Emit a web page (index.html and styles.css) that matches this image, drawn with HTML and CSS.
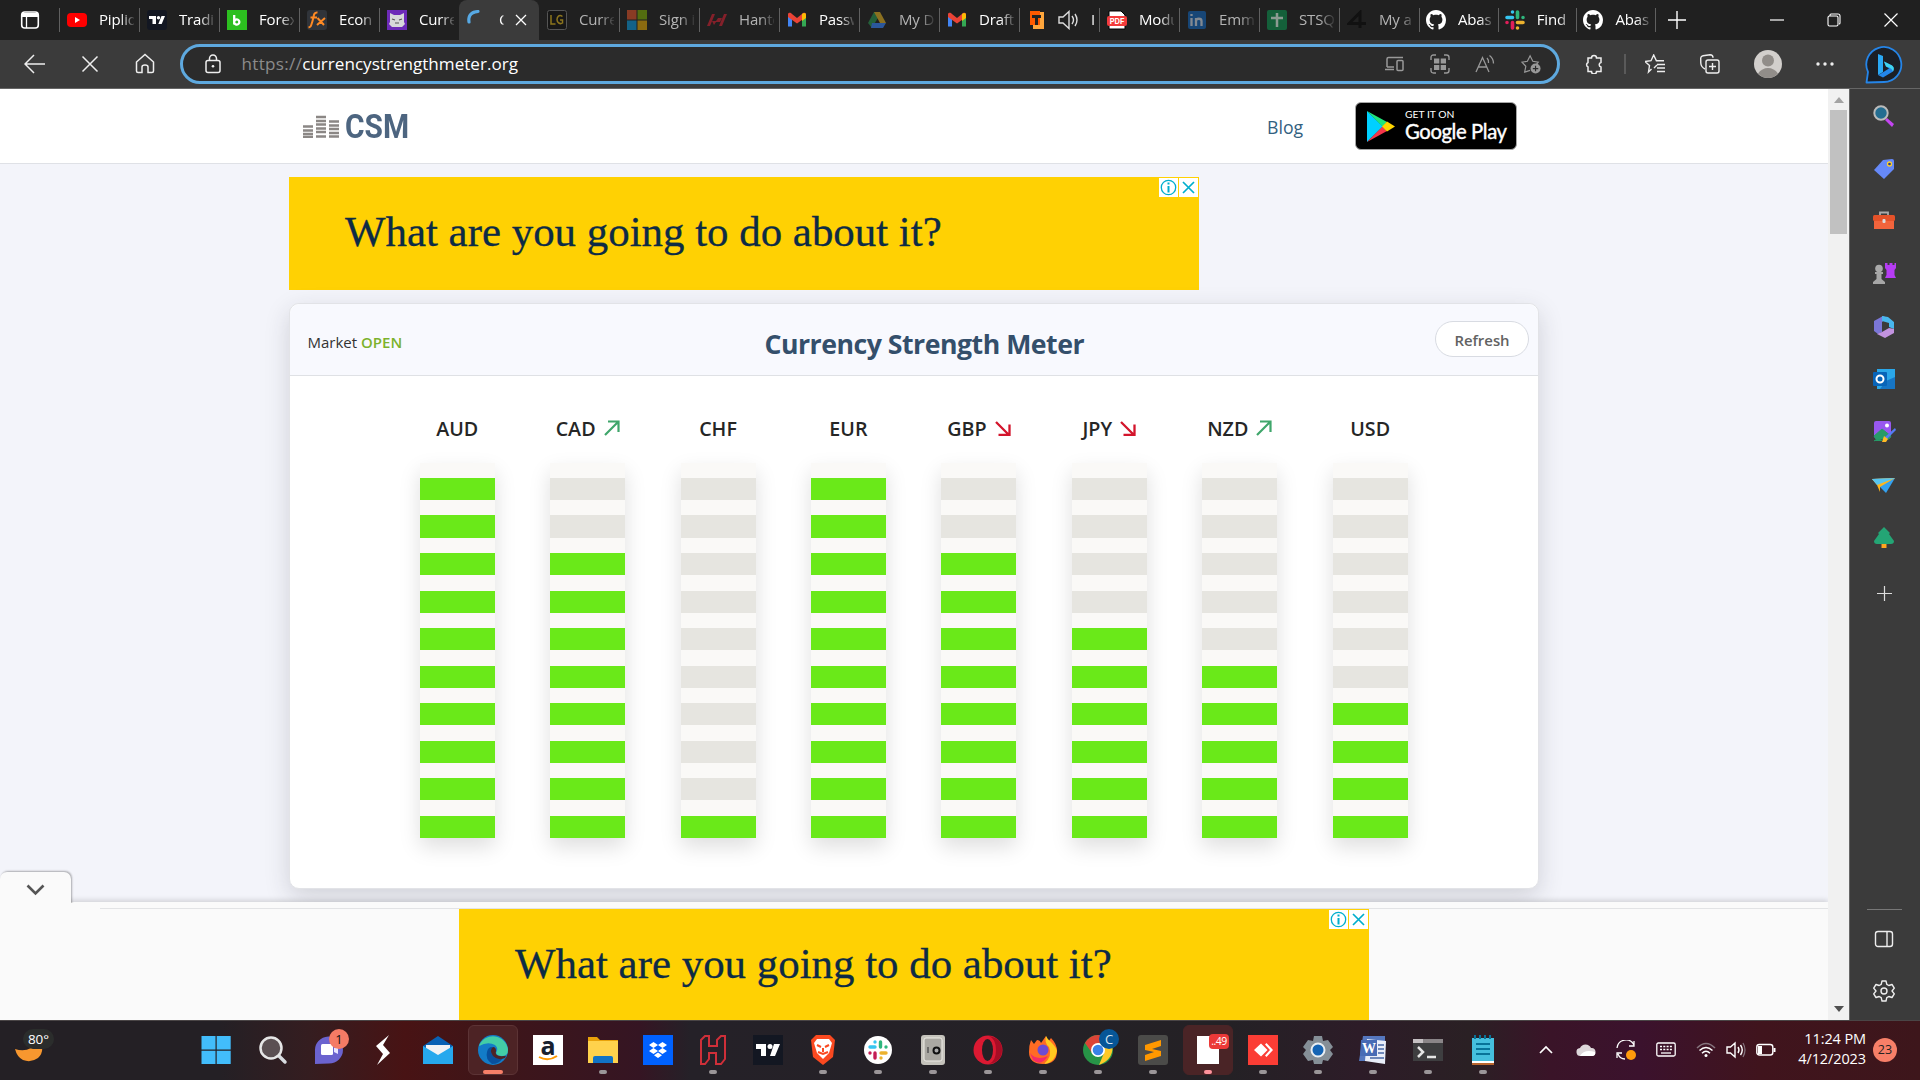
FILE: index.html
```html
<!DOCTYPE html>
<html lang="en">
<head>
<meta charset="utf-8">
<title>Currency Strength Meter</title>
<link rel="stylesheet" href="styles.css">
</head>
<body>
<div class="screen">
  <div class="tabstrip">
    <div class="tab-menu"><svg width="20" height="20" viewBox="0 0 20 20"><rect x="1.7" y="2" width="16.6" height="16" rx="3" fill="none" stroke="#fff" stroke-width="1.6"/><path d="M2 3h16v4H2z" fill="#fff"/><path d="M6.5 6v12" stroke="#fff" stroke-width="1.3"/></svg></div>
    <div class="tab"><svg viewBox="0 0 20 20"><rect y="3" width="20" height="14" rx="4" fill="#f00"/><path d="M8 7l5 3-5 3z" fill="#fff"/></svg><span>Pipliq</span></div>
    <div class="tab"><svg viewBox="0 0 20 20"><rect width="20" height="20" rx="3" fill="#131722"/><path d="M2 6h7v8H5.500V9H2zM14.500 6H18l-3.300 8h-3.400z" fill="#fff"/><circle cx="11.500" cy="7.700" r="1.700" fill="#fff"/></svg><span>Tradi</span></div>
    <div class="tab"><svg viewBox="0 0 20 20"><rect width="20" height="20" fill="#2cbf1f"/><path d="M7.200 5v9.500M7.200 11.500a2.600 2.600 0 1 1 0 1" fill="none" stroke="#fff" stroke-width="2.300"/></svg><span>Forex</span></div>
    <div class="tab"><svg viewBox="0 0 20 20"><rect width="20" height="20" rx="3" fill="#30343a"/><path d="M10.500 2.500C6.500 2 7 6 5.500 11S4 17 1.500 17.500M3.500 7.500h6.500M10.500 8l6.500 7M18 8l-8 7" fill="none" stroke="#ff8a24" stroke-width="2"/></svg><span>Econ</span></div>
    <div class="tab"><svg viewBox="0 0 20 20"><rect width="20" height="20" fill="#6d2ab8"/><path d="M3 3l4 2h6l4-2v9l1 2-3 3H5l-3-3 1-2z" fill="#d8d8da"/><path d="M5 9l3 1M15 9l-3 1M8 13h4" stroke="#555" stroke-width="1.200"/></svg><span>Curre</span></div>
    <div class="tab active"><svg viewBox="0 0 20 20"><path d="M2 12C1 6 4 2 11 1.500" fill="none" stroke="#57a9e4" stroke-width="3.200" stroke-linecap="round" stroke-dasharray="3.500 1"/></svg><span>C</span><svg class="close" viewBox="0 0 12 12"><path d="M1 1l10 10M11 1L1 11" stroke="#fff" stroke-width="1.300"/></svg></div>
    <div class="tab dim"><svg viewBox="0 0 20 20"><rect x=".5" y=".5" width="19" height="19" rx="2" fill="#171717" stroke="#555"/><path d="M4 5v9h4.500M15.500 6.500C12 4 10 7 10 9.700s3 5 5.500 3.300V10H13" fill="none" stroke="#8c751d" stroke-width="1.500"/></svg><span>Curre</span></div>
    <div class="tab dim"><svg viewBox="0 0 20 20"><path d="M0 0h9.500v9.500H0z" fill="#893b24"/><path d="M10.500 0H20v9.500h-9.500z" fill="#536d10"/><path d="M0 10.500h9.500V20H0z" fill="#136287"/><path d="M10.500 10.500H20V20h-9.500z" fill="#8b6a10"/></svg><span>Sign i</span></div>
    <div class="tab dim"><svg viewBox="0 0 20 20"><path d="M0 16L5 4h3L3 16zM5 11h4l2-3h4l-2 4H9l-2 3zM12 16l5-12h3l-5 12z" fill="#84202a"/></svg><span>Hante</span></div>
    <div class="tab"><svg viewBox="0 0 20 20"><path d="M1 16.500V4l4 3v9.500z" fill="#4285f4"/><path d="M15 7l4-3v12.500h-4z" fill="#34a853"/><path d="M1 4c1-2 3-1 4 0l5 4 5-4c1-1 3-2 4 0v3l-9 6.500L1 7z" fill="#ea4335"/><path d="M15 4c2-2 4-1 4 1v3l-4 3z" fill="#fbbc04"/></svg><span>Passw</span></div>
    <div class="tab dim"><svg viewBox="0 0 20 20"><path d="M7 2h3l2 4-7 12-4-5z" fill="#245f39"/><path d="M7 2h6l6 11h-6z" fill="#8b7020"/><path d="M5 13h14l-3 5H4z" fill="#2b579c"/></svg><span>My D</span></div>
    <div class="tab"><svg viewBox="0 0 20 20"><path d="M1 16.500V4l4 3v9.500z" fill="#4285f4"/><path d="M15 7l4-3v12.500h-4z" fill="#34a853"/><path d="M1 4c1-2 3-1 4 0l5 4 5-4c1-1 3-2 4 0v3l-9 6.500L1 7z" fill="#ea4335"/><path d="M15 4c2-2 4-1 4 1v3l-4 3z" fill="#fbbc04"/></svg><span>Draft</span></div>
    <div class="tab"><svg viewBox="0 0 20 20"><path d="M6 2h11v17H6z" fill="#ffa63c"/><path d="M3 1h10v14H3z" fill="#ff5a00"/><path d="M5 5h9v3h-3v7H8V8H5z" fill="#222"/></svg><svg class="sound" viewBox="0 0 20 20"><path d="M1 7h4l6-5.500v17L5 13H1zM14 6q3 4 0 8M17 4q4 6 0 12" fill="none" stroke="#ddd" stroke-width="1.400"/></svg><span>I</span></div>
    <div class="tab"><svg viewBox="0 0 20 20"><path d="M2 1h12l4 4v14H2z" fill="#fff" stroke="#000"/><rect y="6" width="20" height="10" rx="2" fill="#f33b3b"/><text x="10" y="13.700" font-family="Inter, sans-serif" font-weight="bold" font-size="7.500" fill="#fff" text-anchor="middle">PDF</text></svg><span>Modu</span></div>
    <div class="tab dim"><svg viewBox="0 0 20 20"><rect x="1" y="1" width="18" height="18" rx="2" fill="#174676"/><path d="M4.500 8v8M9 8v8M9 11c0-3 5.500-3 5.500 0v5M4.500 4v2" fill="none" stroke="#828991" stroke-width="2.300"/></svg><span>Emm</span></div>
    <div class="tab dim"><svg viewBox="0 0 20 20"><rect width="20" height="20" rx="2" fill="#14603a"/><path d="M10 3v14M4 8h12" stroke="#8b9b92" stroke-width="2.500"/></svg><span>STSQ</span></div>
    <div class="tab dim"><svg viewBox="0 0 20 20"><path d="M13 18V2.500L2 13.500h17" fill="none" stroke="#111" stroke-width="3"/></svg><span>My a</span></div>
    <div class="tab n"><svg viewBox="0 0 16 16"><path fill="#fff" d="M8 0C3.580 0 0 3.580 0 8c0 3.540 2.290 6.530 5.470 7.590.4.070.55-.17.55-.38 0-.19-.01-.82-.01-1.490-2.010.37-2.530-.49-2.690-.94-.09-.23-.48-.94-.82-1.130-.28-.15-.68-.52-.01-.53.63-.01 1.080.58 1.230.82.72 1.210 1.870.87 2.330.66.07-.52.28-.87.51-1.070-1.780-.2-3.640-.89-3.640-3.950 0-.87.31-1.590.82-2.150-.08-.2-.36-1.020.08-2.120 0 0 .67-.21 2.200.82.64-.18 1.320-.27 2-.27s1.360.09 2 .27c1.530-1.040 2.200-.82 2.200-.82.44 1.100.16 1.920.08 2.120.51.56.82 1.270.82 2.150 0 3.070-1.870 3.750-3.650 3.950.29.25.54.73.54 1.480 0 1.070-.01 1.930-.01 2.200 0 .21.15.46.55.38A8 8 0 0 0 16 8c0-4.420-3.580-8-8-8z"/></svg><span>Abas</span></div>
    <div class="tab n"><svg viewBox="0 0 20 20" stroke-width="3.600" stroke-linecap="round"><path d="M2 7.500h5.500M7.500 2v0" stroke="#36c5f0"/><path d="M12.500 2v5.500M18 7.500v0" stroke="#2eb67d"/><path d="M12.500 12.500H18M12.500 18v0" stroke="#ecb22e"/><path d="M7.500 12.500V18M2 12.500v0" stroke="#e01e5a"/></svg><span>Find</span></div>
    <div class="tab n"><svg viewBox="0 0 16 16"><path fill="#fff" d="M8 0C3.580 0 0 3.580 0 8c0 3.540 2.290 6.530 5.470 7.590.4.070.55-.17.55-.38 0-.19-.01-.82-.01-1.490-2.010.37-2.530-.49-2.690-.94-.09-.23-.48-.94-.82-1.130-.28-.15-.68-.52-.01-.53.63-.01 1.080.58 1.230.82.72 1.210 1.870.87 2.330.66.07-.52.28-.87.51-1.070-1.780-.2-3.640-.89-3.640-3.950 0-.87.31-1.590.82-2.150-.08-.2-.36-1.020.08-2.120 0 0 .67-.21 2.200.82.64-.18 1.320-.27 2-.27s1.360.09 2 .27c1.530-1.040 2.200-.82 2.200-.82.44 1.100.16 1.920.08 2.120.51.56.82 1.270.82 2.150 0 3.070-1.870 3.750-3.650 3.950.29.25.54.73.54 1.480 0 1.070-.01 1.930-.01 2.200 0 .21.15.46.55.38A8 8 0 0 0 16 8c0-4.420-3.580-8-8-8z"/></svg><span>Abas</span></div>
    <div class="new-tab"><svg width="18" height="18" viewBox="0 0 18 18"><path d="M9 0v18M0 9h18" stroke="#fff" stroke-width="1.400"/></svg></div>
    <div class="window-buttons">
      <svg viewBox="0 0 14 14"><path d="M0 7h14" stroke="#fff" stroke-width="1.200"/></svg>
      <svg viewBox="0 0 14 14"><path d="M3 3V2q0-1 1-1h7q2 0 2 2v7q0 1-1 1" fill="none" stroke="#fff" stroke-width="1.100"/><rect x="1" y="3" width="10" height="10" rx="1.500" fill="none" stroke="#fff" stroke-width="1.100"/></svg>
      <svg viewBox="0 0 14 14"><path d="M.5.500l13 13M13.500.500l-13 13" stroke="#fff" stroke-width="1.200"/></svg>
    </div>
  </div>

  <div class="toolbar">
    <div class="nav-buttons">
      <svg viewBox="0 0 22 22"><path d="M21 11H1M10 2l-9 9 9 9" fill="none" stroke="#eee" stroke-width="1.500"/></svg>
      <svg viewBox="0 0 22 22"><path d="M3.500 3.500l15 15M18.500 3.500l-15 15" stroke="#eee" stroke-width="1.500"/></svg>
      <svg viewBox="0 0 22 22"><path d="M2.500 9L11 1.500 19.500 9v9q0 1.500-1.500 1.500h-4V14q0-2-3-2t-3 2v5.500H4q-1.500 0-1.500-1.500z" fill="none" stroke="#eee" stroke-width="1.500"/></svg>
    </div>
    <div class="address">
      <svg class="lock" viewBox="0 0 18 20"><rect x="2" y="6.500" width="14" height="12" rx="2" fill="none" stroke="#eee" stroke-width="1.500"/><path d="M5.500 6V4.500a3.500 3.500 0 0 1 7 0V6" fill="none" stroke="#eee" stroke-width="1.500"/><circle cx="9" cy="12.300" r="1.300" fill="#eee"/></svg>
      <div class="url"><span>https://</span>currencystrengthmeter.org</div>
      <div class="address-actions">
        <svg viewBox="0 0 20 20"><path d="M10 15.500H1M3 13V5q0-1.500 1.500-1.500H19M10 13H3" fill="none" stroke="#999" stroke-width="1.500"/><rect x="13" y="6.500" width="6" height="10" rx="1" fill="none" stroke="#999" stroke-width="1.500"/></svg>
        <svg viewBox="0 0 20 20"><path d="M1 6V3.500Q1 1 3.500 1H6M14 1h2.500Q19 1 19 3.500V6M19 14v2.500q0 2.500-2.500 2.500H14M6 19H3.500Q1 19 1 16.500V14" fill="none" stroke="#999" stroke-width="1.400"/><path d="M4 4.500h5.300v5H4zM10.700 4.500H16v5h-5.300zM4 11h5.300v5H4zM10.700 11H16v5h-5.300z" fill="#999"/></svg>
        <svg viewBox="0 0 20 20"><path d="M1 18L7.500 3.500 14 18M3.300 13h8.400M12 4q2 2 1.500 5M14.500 1.500q4 3 4 8" fill="none" stroke="#999" stroke-width="1.300"/></svg>
        <svg viewBox="0 0 22 22"><path d="M10 18l-6 2 1.300-6.500L1 9l6-1 3-6 3 6 6 1-2 2.500" fill="none" stroke="#999" stroke-width="1.300"/><circle cx="16" cy="16" r="5.500" fill="#999"/><path d="M16 13v6M13 16h6" stroke="#2b2b2b" stroke-width="1.300"/></svg>
      </div>
    </div>
    <div class="browser-actions">
      <svg class="ext" viewBox="0 0 20 20"><path d="M4 4h3.500a2.500 2.500 0 0 1 5 0H17v4.500a2.300 2.300 0 0 0 0 4.500v4.500h-4.500a2.500 2.500 0 0 1-5 0H4V13a2.500 2.500 0 0 1 0-4.500z" fill="none" stroke="#eee" stroke-width="1.500"/></svg>
      <i class="divider"></i>
      <svg class="fav" viewBox="0 0 20 20"><path d="M6.500 15l-3 3 1-6.500L0 7.500l6-.8L8.700 1l2.700 5.700H19M12 10.500h8M12 14h8M12 17.500h8M9 14l3-3" fill="none" stroke="#eee" stroke-width="1.400"/></svg>
      <svg class="coll" viewBox="0 0 20 20"><path d="M5 15Q1 13 .8 9L.7 4Q1 2 3 1.700L10 .8q3 0 3 3" fill="none" stroke="#eee" stroke-width="1.400"/><rect x="6" y="6" width="13" height="13" rx="2" fill="none" stroke="#eee" stroke-width="1.400"/><path d="M12.500 9v7M9 12.500h7" stroke="#eee" stroke-width="1.400"/></svg>
      <svg class="avatar" viewBox="0 0 28 28"><circle cx="14" cy="14" r="14" fill="#d2cfcc"/><circle cx="14" cy="10.500" r="6" fill="#918d89"/><path d="M4 23.500Q8 18 14 18t10 5.500Q20 28 14 28T4 23.500z" fill="#918d89"/></svg>
      <svg class="more" viewBox="0 0 18 4"><circle cx="2" cy="2" r="1.700" fill="#eee"/><circle cx="9" cy="2" r="1.700" fill="#eee"/><circle cx="16" cy="2" r="1.700" fill="#eee"/></svg>
    </div>
  </div>

  <div class="main">
    <div class="page">
      <header class="site-header">
        <div class="brand">
          <svg width="36" height="23" viewBox="0 0 36 23"><path d="M0 11.500h10M0 15.500h10M0 19h10M0 22h10M13 2h10M13 6h10M13 9.500h10M13 13.500h10M13 17h10M13 21.500h10M26 6.500h10M26 10.500h10M26 14h10M26 18h10M26 21.500h10" stroke="#8b8785" stroke-width="2.600"/></svg>
          <b>CSM</b>
        </div>
        <a class="blog">Blog</a>
        <div class="play">
          <svg width="28" height="31" viewBox="0 0 28 31"><path d="M0 0v31l16-15.500z" fill="#00d0ff"/><path d="M0 0l20 11-4.500 4.500z" fill="#20e57b"/><path d="M0 31l20-11-4.500-4.500z" fill="#f5364a"/><path d="M20 10.500l8 5-8 5-5-5z" fill="#ffd500"/></svg>
          <div><small>GET IT ON</small><strong>Google Play</strong></div>
        </div>
      </header>

      <div class="content">
        <div class="ad">
          <p>What are you going to do about it?</p>
          <div class="ad-controls"><svg viewBox="0 0 19 19"><circle cx="9.500" cy="9.500" r="7.200" fill="none" stroke="#00aecd" stroke-width="1.300"/><path d="M9.500 4.500v2M9.500 8v6.500" stroke="#00aecd" stroke-width="2"/></svg><svg viewBox="0 0 19 19"><path d="M4 4l11 11M15 4L4 15" stroke="#00aecd" stroke-width="1.700"/></svg></div>
        </div>

        <section class="card">
          <div class="card-head">
            <div class="market">Market <b>OPEN</b></div>
            <h1>Currency Strength Meter</h1>
            <button class="refresh">Refresh</button>
          </div>
          <div class="meters">
            <div class="meter"><h2>AUD</h2><div class="bars v10"><i></i><i></i><i></i><i></i><i></i><i></i><i></i><i></i><i></i><i></i></div></div>
            <div class="meter"><h2>CAD<svg viewBox="0 0 16 16"><path d="M1 15L14 2M4 1.500h10.500V12" fill="none" stroke="#3fa66b" stroke-width="2.200"/></svg></h2><div class="bars v8"><i></i><i></i><i></i><i></i><i></i><i></i><i></i><i></i><i></i><i></i></div></div>
            <div class="meter"><h2>CHF</h2><div class="bars v1"><i></i><i></i><i></i><i></i><i></i><i></i><i></i><i></i><i></i><i></i></div></div>
            <div class="meter"><h2>EUR</h2><div class="bars v10"><i></i><i></i><i></i><i></i><i></i><i></i><i></i><i></i><i></i><i></i></div></div>
            <div class="meter"><h2>GBP<svg viewBox="0 0 16 16"><path d="M1 2l13 13M3.500 15h11V4.500" fill="none" stroke="#d3152c" stroke-width="2.300"/></svg></h2><div class="bars v8"><i></i><i></i><i></i><i></i><i></i><i></i><i></i><i></i><i></i><i></i></div></div>
            <div class="meter"><h2>JPY<svg viewBox="0 0 16 16"><path d="M1 2l13 13M3.500 15h11V4.500" fill="none" stroke="#d3152c" stroke-width="2.300"/></svg></h2><div class="bars v6"><i></i><i></i><i></i><i></i><i></i><i></i><i></i><i></i><i></i><i></i></div></div>
            <div class="meter"><h2>NZD<svg viewBox="0 0 16 16"><path d="M1 15L14 2M4 1.500h10.500V12" fill="none" stroke="#3fa66b" stroke-width="2.200"/></svg></h2><div class="bars v5"><i></i><i></i><i></i><i></i><i></i><i></i><i></i><i></i><i></i><i></i></div></div>
            <div class="meter"><h2>USD</h2><div class="bars v4"><i></i><i></i><i></i><i></i><i></i><i></i><i></i><i></i><i></i><i></i></div></div>
          </div>
        </section>
      </div>

      <div class="anchor-ad">
        <div class="anchor-toggle"><svg width="19" height="12" viewBox="0 0 19 12"><path d="M1.500 1.500l8 8 8-8" fill="none" stroke="#555" stroke-width="2.600"/></svg></div>
        <div class="ad">
          <p>What are you going to do about it?</p>
          <div class="ad-controls"><svg viewBox="0 0 19 19"><circle cx="9.500" cy="9.500" r="7.200" fill="none" stroke="#00aecd" stroke-width="1.300"/><path d="M9.500 4.500v2M9.500 8v6.500" stroke="#00aecd" stroke-width="2"/></svg><svg viewBox="0 0 19 19"><path d="M4 4l11 11M15 4L4 15" stroke="#00aecd" stroke-width="1.700"/></svg></div>
        </div>
      </div>
    </div>

    <div class="scrollbar">
      <svg viewBox="0 0 10 6"><path d="M0 6l5-6 5 6z" fill="#a3a3a3"/></svg>
      <div class="thumb"></div>
      <svg class="down" viewBox="0 0 10 6"><path d="M0 0l5 6 5-6z" fill="#505050"/></svg>
    </div>

    <aside class="sidebar">
      <svg class="bing" viewBox="0 0 38 38"><path d="M1.500 36.500L3 26A17.500 17.500 0 1 1 19 36z" fill="#1b1f26" stroke="#2585e8" stroke-width="1.800" stroke-linejoin="round"/><path d="M13 8l5 2v16l-5 3z" fill="#29a8f5"/><path d="M13 29l5 2.500 10-6q2-4-1-6l-8-4 2 5 3 2-8 5z" fill="#2386ea"/><path d="M19 15.500l8 4q3 2 1 6-1-3-4-4l-3-1z" fill="#40d5ee"/></svg>
      <div class="apps">
        <svg viewBox="0 0 24 24"><path d="M15 14l7 6-2 3-7-7z" fill="#c445f2"/><circle cx="9" cy="9" r="6.700" fill="#246d91" stroke="#bbb" stroke-width="2"/></svg>
        <svg viewBox="0 0 24 24"><path d="M2 13L11 3l9-1q2 0 2 2v8L12 22z" fill="#6689f8"/><circle cx="17.500" cy="7" r="2" fill="#263a8a" stroke="#ffd02c" stroke-width="1.300"/></svg>
        <svg viewBox="0 0 24 24"><path d="M8 6V3.500h8V6" fill="none" stroke="#aaa" stroke-width="1.800"/><rect x="1" y="6" width="22" height="6" rx="1.500" fill="#e55229"/><path d="M2 12h20v8H2z" fill="#f2643c"/><rect x="10.500" y="10" width="3" height="4" rx="1" fill="#ddd"/></svg>
        <svg viewBox="0 0 24 24"><path d="M13 1h2.500v2h2V1h3v2h2V1H24v5l-1.500 2v5l1.500 3H13l1.500-3V8L13 6z" fill="#b63cf4"/><circle cx="7" cy="6.500" r="3.800" fill="#aaa"/><path d="M3 10h8v2H9.500v5l3.500 3v2H1v-2l3.500-3v-5H3z" fill="#a6a6a6"/></svg>
        <svg viewBox="0 0 24 24"><path d="M2 6l9-5 4 2-5 4v10l-4 2-4-3z" fill="#7b77d8"/><path d="M10 1l6 1 6 5v7l-5-2V8l-7-2z" fill="#48b7ee"/><path d="M22 14v4l-9 5-8-4 5-2 7-4z" fill="#c293df"/></svg>
        <svg viewBox="0 0 24 24"><path d="M5 2h18v20H5z" fill="#2aa7e9"/><path d="M14 14l9-4v12H8z" fill="#1675c5"/><rect x="1" y="5" width="14" height="14" rx="1" fill="#0864b8"/><circle cx="8" cy="12" r="3.500" fill="none" stroke="#fff" stroke-width="2"/></svg>
        <svg viewBox="0 0 24 24"><rect x="2" y="1" width="17" height="17" rx="2" fill="#9858ef"/><circle cx="15" cy="5.500" r="2" fill="#fff"/><path d="M2 16l8-7 9 7-2 3H4zM2 21q5-4 8 0" fill="#279b68" stroke="#279b68"/><path d="M23 8L13 17l2 2 9-9z" fill="#557bf5"/><path d="M10 22l2-6 4 3-2 3z" fill="#ffbb25"/></svg>
        <svg viewBox="0 0 24 24"><path d="M0 6l23-1-9 15-6-6z" fill="#35a1ef"/><path d="M0 6l23-1L8 14v5l-3-7z" fill="#ffb61d"/><path d="M0 6l23-1-18 7z" fill="#57c5f1"/></svg>
        <svg viewBox="0 0 24 24"><path d="M9.500 16h5v6h-5z" fill="#ffa51f"/><path d="M12 1l6 6-1 1 5 7q0 3-3 3H5q-3 0-3-3l5-7-1-1z" fill="#24a575"/></svg>
      </div>
      <svg class="add" viewBox="0 0 15 15"><path d="M7.500 0v15M0 7.500h15" stroke="#ddd" stroke-width="1.200"/></svg>
      <div class="side-bottom">
        <svg viewBox="0 0 20 20"><rect x="1.500" y="2.500" width="17" height="15" rx="2.500" fill="none" stroke="#eee" stroke-width="1.400"/><path d="M13 3v14" stroke="#eee" stroke-width="1.400"/></svg>
        <svg viewBox="0 0 24 24"><path d="M10 2h4l.8 3.300 2 1.200L20 5.500l2.300 3.600L20 12l2.300 2.900L20 18.500l-3.200-1-2 1.200L14 22h-4l-.8-3.300-2-1.200-3.200 1-2.300-3.600L4 12 1.700 9.100 4 5.500l3.200 1 2-1.200z" fill="none" stroke="#eee" stroke-width="1.400" stroke-linejoin="round"/><circle cx="12" cy="12" r="3" fill="none" stroke="#eee" stroke-width="1.400"/></svg>
      </div>
    </aside>
  </div>

  <div class="taskbar">
    <div class="weather"><svg width="30" height="28" viewBox="0 0 30 28"><path d="M1 14q9 3 16-1 7-5 8-11 7 14-1 21-7 5-15 2-6-3-8-11z" fill="#f7972f"/></svg><span>80°</span></div>
    <div class="launch">
      <div class="start"><svg viewBox="0 0 30 30"><path d="M.5 1h14v13.500H.5zM15.700 1h14v13.500h-14zM.5 15.700h14V29H.5zM15.700 15.700h14V29h-14z" fill="#42bdfb"/></svg></div>
      <div><svg viewBox="0 0 30 30"><path d="M20 20l7 7" stroke="#d8dce0" stroke-width="3.500" stroke-linecap="round"/><circle cx="13" cy="13" r="10.500" fill="#5b5053" stroke="#e6e6e6" stroke-width="2.500"/></svg></div>
      <div><svg viewBox="0 0 30 30"><path d="M2 29V16A14 13.500 0 1 1 16 28.500z" fill="#6b63cf"/><rect x="8" y="9" width="12" height="11" rx="1.500" fill="#fff"/><path d="M21 13l4-2v8l-4-2z" fill="#e8e5ff"/></svg><em class="badge">1</em></div>
      <div><svg viewBox="0 0 30 30"><path d="M21 0l-13 11 7 8-6 11 13-12-7-8z" fill="#fff"/></svg></div>
      <div><svg viewBox="0 0 30 30"><path d="M0 11L15 1l15 10v6H0z" fill="#0961b4"/><path d="M3 10h24v8l-12 6L3 18z" fill="#f2f2f4"/><path d="M0 11l15 9 15-9v18H0z" fill="#26a8ed"/></svg></div>
      <div class="focus"><svg viewBox="0 0 30 30"><circle cx="15" cy="15" r="15" fill="#137cc7"/><path d="M1 11A15 15 0 0 1 30 15q0 6-6 6-5 0-6-3 3-5-1-8Q10 6 1 11z" fill="#43cda6"/><path d="M14 12q4 2 2 5 0 5 9 6-4 6-11 6-7-5-5-12 1-5 5-5z" fill="#08509d"/><path d="M15 12q-4 3 0 9 5 5 12 2 2-3-1-2-10 1-8-5 0-4-3-4z" fill="#4d2325"/></svg><s class="wide"></s></div>
      <div><svg viewBox="0 0 30 30"><path d="M0 0h30v30H0z" fill="#fff"/><text x="15" y="20" font-family="Open Sans, sans-serif" font-size="25" font-weight="bold" text-anchor="middle" fill="#18212f">a</text><path d="M6 22q9 5 18-1" fill="none" stroke="#ff9900" stroke-width="2"/></svg></div>
      <div><svg viewBox="0 0 30 30"><path d="M0 2h9l3 3h18v23H0z" fill="#e9a20a"/><path d="M0 6h30v22H0z" fill="#ffd24c"/><path d="M5 28v-5q0-2 2-2h16q2 0 2 2v5z" fill="#1173c5"/></svg><s></s></div>
      <div><svg viewBox="0 0 30 30"><path d="M0 0h30v30H0z" fill="#0061ff"/><path d="M10.500 7l4.500 3-4.500 3L6 10zM19.500 7l4.500 3-4.500 3-4.500-3zM10.500 13l4.500 3-4.500 3L6 16zM19.500 13l4.500 3-4.500 3-4.500-3zM15 17.500l4 2.700-4 2.700-4-2.700z" fill="#fff"/></svg></div>
      <div><svg viewBox="0 0 30 30"><path d="M3 5l4-4h4v10h8V5l4-4h4v23l-4 5h-5V18h-7v6l-4 5H3z" fill="none" stroke="#cf2f39" stroke-width="2"/></svg><s></s></div>
      <div><svg viewBox="0 0 30 30"><path d="M0 0h30v30H0z" fill="#131722"/><path d="M3 9h10v12H8v-7H3zM21 9h6l-5 12h-5z" fill="#fff"/><circle cx="17" cy="11.500" r="2.500" fill="#fff"/></svg></div>
      <div><svg viewBox="0 0 30 30"><path d="M8 0h14l5 5-2 17-10 8-10-8L3 5z" fill="#fa4920"/><path d="M9 4h12l3 4-3 10-6 6-6-6L6 8z" fill="#fff"/><path d="M9 10l4 2M21 10l-4 2M15 13v4M10 17l5 2 5-2" fill="none" stroke="#fa4920" stroke-width="2"/></svg><s></s></div>
      <div><svg viewBox="0 0 30 30"><circle cx="15" cy="15" r="14" fill="#fff"/><g stroke-width="3.400" stroke-linecap="round"><path d="M7 12h5M12 7v0" stroke="#36c5f0"/><path d="M17.500 7v5M23 12v0" stroke="#2eb67d"/><path d="M18 18h5M18 23v0" stroke="#ecb22e"/><path d="M12 18v5M7 18v0" stroke="#c41e55"/></g></svg><s></s></div>
      <div><svg viewBox="0 0 30 30"><rect x="3" width="24" height="30" rx="3" fill="#c5c3bc"/><rect x="6" y="3" width="18" height="23" rx="2" fill="#aaa8a2" stroke="#eeece6"/><circle cx="18.500" cy="15.500" r="3" fill="#aaa" stroke="#111" stroke-width="2"/><path d="M10 12v6" stroke="#555" stroke-width="1.500"/></svg><s></s></div>
      <div><svg viewBox="0 0 30 30"><ellipse cx="15" cy="15" rx="14.500" ry="14.500" fill="#dc1932"/><path d="M16 1q13 2 13 14T16 29q7-3 7-14T16 1z" fill="#a70d25"/><ellipse cx="14.500" cy="15" rx="5.500" ry="11" fill="#252025"/></svg><s></s></div>
      <div><svg viewBox="0 0 30 30"><path d="M3 5l3 4 3-4q3 0 4 3l5-7 2 6 3-4q6 6 6 13 0 13-14 13T1 17Q1 10 3 5z" fill="#ff6b24"/><path d="M18 1q2 4 4 5 7 7 7 10-2 12-13 13 9-8 5-17-5-4-3-11z" fill="#ffc91f"/><circle cx="15" cy="15" r="5.500" fill="#6d4bd2"/><path d="M2 18q6 8 18 3-7 11-15 4z" fill="#f42b67"/></svg><s></s></div>
      <div><svg viewBox="0 0 30 30"><circle cx="15" cy="15" r="15" fill="#279447"/><path d="M2 8Q7 0 15 0q9 0 13.500 8H15l-6 10z" fill="#dc4437"/><path d="M15 8h14q3 16-13 22l5-12z" fill="#ffc928"/><circle cx="15" cy="15" r="7" fill="#fff"/><circle cx="15" cy="15" r="5.300" fill="#3982e8"/></svg><em class="badge blue">C</em><s></s></div>
      <div><svg viewBox="0 0 30 30"><rect width="30" height="30" rx="3" fill="#4b4b49"/><path d="M7 10l16-5v6l-9 3 9 2v5L7 26v-6l9-3-9-2z" fill="#ff9800"/></svg><s></s></div>
      <div class="focus red"><svg viewBox="0 0 30 30"><path d="M4 1h22v28H4z" fill="#fff"/></svg><em class="badge count">..49</em><s class="pink"></s></div>
      <div><svg viewBox="0 0 30 30"><path d="M0 0h30v30H0z" fill="#fb3d35"/><path d="M6 15l7-6.500 6.500 6.500-6.500 6.500zM17 9.500l1.500-1.500 6.500 7-6.500 7-1.500-1.500 5-5.500z" fill="#fff"/></svg><s></s></div>
      <div><svg viewBox="0 0 30 30"><path d="M11 1h8l1 5 5-1 5 7-3 3 3 4-5 7-5-1-1 4h-8l-1-4-5 1-5-7 3-4-3-3 5-7 5 1z" fill="#858f97"/><circle cx="15" cy="15" r="6.500" fill="#1464b4" stroke="#e9eef2" stroke-width="2"/></svg><s></s></div>
      <div><svg viewBox="0 0 30 30"><path d="M5 1h22v25L1 26z" fill="#5577be"/><path d="M9 4l19 2-1 23-20-3z" fill="#e9eef9"/><path d="M3 5h16v16H2z" fill="#476bb5"/><text x="11" y="18" font-family="Liberation Serif, serif" font-size="14" font-weight="bold" text-anchor="middle" fill="#fff">W</text><path d="M20 10h6M20 14h6M20 18h6M12 23h14" stroke="#4567a5" stroke-width="1.500"/></svg><s></s></div>
      <div><svg viewBox="0 0 30 30"><path d="M0 4h30v22H0z" fill="#3e3e40"/><path d="M0 4h30v4H0z" fill="#8a8588"/><path d="M0 4h10v4H0z" fill="#c5c0c3"/><path d="M5 12l5 5-5 5M14 22h9" fill="none" stroke="#e5e5e5" stroke-width="2.500"/></svg><s></s></div>
      <div><svg viewBox="0 0 30 30"><path d="M4 3h22v27H4z" fill="#45bfdd"/><path d="M4 26h22v2H4z" fill="#fff"/><path d="M4 28h22v2H4z" fill="#b8652e"/><path d="M8 9h14M8 14h14M8 19h14M7 0v4M12 0v4M17 0v4M22 0v4" stroke="#087398" stroke-width="2"/></svg><s></s></div>
    </div>
    <div class="tray">
      <svg viewBox="0 0 20 20"><path d="M4 13l6-6 6 6" fill="none" stroke="#fff" stroke-width="1.700"/></svg>
      <svg viewBox="0 0 20 20"><path d="M5 16a4 4 0 0 1-1-8 6 6 0 0 1 11 0 4 4 0 0 1 1 8z" fill="#ddd7da"/><path d="M4 16q4-7 15-4 1 4-3 4z" fill="#fff"/></svg>
      <svg viewBox="0 0 20 20"><path d="M1 8a9 9 0 0 1 17-3M18 1v5h-5M1 18v-5h5M2 14q2 5 7 5" fill="none" stroke="#fff" stroke-width="1.300"/><circle cx="15" cy="15" r="5" fill="#ff9c0c"/></svg>
      <svg viewBox="0 0 20 20"><rect x=".8" y="3" width="18.400" height="13" rx="1.500" fill="none" stroke="#fff" stroke-width="1.300"/><path d="M4 6.500h12M4 9.500h12" stroke="#fff" stroke-width="1.500" stroke-dasharray="2 1.300"/><path d="M5 13h10" stroke="#fff" stroke-width="1.300"/></svg>
      <div class="status">
        <svg viewBox="0 0 20 20"><path d="M1 8q9-9 18 0" fill="none" stroke="#85747d" stroke-width="1.500"/><path d="M3.500 10.500q6.500-6 13 0M6 13.300q4-4 8 0" fill="none" stroke="#fff" stroke-width="1.500"/><circle cx="10" cy="15.500" r="1.500" fill="#fff"/></svg>
        <svg viewBox="0 0 20 20"><path d="M1 7h3.500L9 3v14l-4.500-4H1zM12 7q2 3 0 6M14.500 5q3.500 5 0 10" fill="none" stroke="#fff" stroke-width="1.400"/><path d="M17 3q4 7 0 14" fill="none" stroke="#85747d" stroke-width="1.200"/></svg>
        <svg viewBox="0 0 20 20"><rect x=".8" y="4.500" width="16" height="10.500" rx="2.500" fill="none" stroke="#fff" stroke-width="1.400"/><path d="M2 6h4v8H2z" fill="#fff"/><path d="M18.500 8v4" stroke="#fff" stroke-width="2"/></svg>
      </div>
      <div class="clock">11:24 PM<br>4/12/2023</div>
      <div class="notify">23</div>
    </div>
  </div>
</div>
</body>
</html>
```
FILE: styles.css
```css
* { box-sizing: border-box; }
body { margin: 0; background: #202020; font-family: "Open Sans", "Noto Sans", sans-serif; }
svg { display: block; flex: none; }
.screen { width: 1920px; height: 1080px; display: flex; flex-direction: column; overflow: hidden; }

/* tab strip */
.tabstrip { height: 40px; flex: none; display: flex; align-items: stretch; background: #202020; color: #fff; }
.tab-menu { width: 59px; display: flex; align-items: center; justify-content: center; }
.tab { flex: none; width: 80px; display: flex; align-items: center; padding-left: 8px; overflow: hidden;
  background: linear-gradient(#606060, #606060) 0 8px / 1px 24px no-repeat; }
.tab.n { width: 78.700px; padding-left: 7px; }
.tab svg { width: 20px; height: 20px; }
.tab span { margin: -2px 0 0 12px; width: 35px; font-size: 15px; letter-spacing: -.15px; white-space: nowrap; overflow: hidden;
  -webkit-mask-image: linear-gradient(90deg, #000 60%, rgba(0, 0, 0, .15)); mask-image: linear-gradient(90deg, #000 60%, rgba(0, 0, 0, .15)); }
.tab.dim span { color: #b4b4b4; }
.tab.active { background: #3b3b3b; border-radius: 8px 8px 0 0; }
.tab.active span { width: 5px; }
.tab.active .close { width: 12px; height: 12px; margin-left: 11px; }
.tab.active + .tab { background: none; }
.tab .sound { margin-left: 11px; }
.tab .sound + span { width: 4px; margin-left: 13px; }
.new-tab { width: 44px; display: flex; align-items: center; justify-content: center; background: linear-gradient(#606060, #606060) 0 8px / 1px 24px no-repeat; }
.window-buttons { margin-left: auto; display: flex; align-items: center; gap: 43px; padding-right: 22px; }
.window-buttons svg { width: 14px; height: 14px; }

/* toolbar */
.toolbar { height: 49px; flex: none; display: flex; align-items: center; background: #3b3b3b; border-bottom: 1px solid #666; }
.nav-buttons { width: 180px; flex: none; display: flex; gap: 33px; padding-left: 24px; }
.nav-buttons svg { width: 22px; height: 22px; }
.address { width: 1380px; flex: none; height: 40px; display: flex; align-items: center; border: 3px solid #5ea9df; border-radius: 20px; background: #2b2b2b; }
.lock { width: 18px; height: 20px; margin-left: 20.500px; }
.url { margin: -2px 0 0 20px; color: #fff; font-size: 17.100px; }
.url span { color: #8b8b8b; letter-spacing: .3px; }
.address-actions { display: flex; align-items: center; gap: 25.500px; margin-left: auto; margin-right: 16.500px; }
.address-actions svg { width: 20px; height: 20px; }
.browser-actions { flex: 1; display: flex; align-items: center; }
.ext { width: 20px; height: 20px; margin-left: 24px; }
.divider { width: 2px; height: 20px; background: #5a5a5a; margin-left: 20px; }
.fav { width: 20px; height: 20px; margin-left: 19px; }
.coll { width: 20px; height: 20px; margin-left: 35px; }
.avatar { width: 28px; height: 28px; margin-left: 34px; }
.more { width: 18px; height: 4px; margin-left: 34px; }

.main { height: 931px; flex: none; display: flex; }
.page { width: 1828px; display: flex; flex-direction: column; background: #f3f4fa; overflow: hidden; }

/* site header */
.site-header { height: 75px; flex: none; display: flex; align-items: center; background: #fff; border-bottom: 1px solid #dfe1e6; padding-left: 303px; }
.brand { width: 964px; display: flex; align-items: center; gap: 6px; padding-top: 1px; }
.brand b { font: bold 33px/36px "Roboto", sans-serif; color: #4d6580; transform: scaleX(.905); transform-origin: left; }
.blog { width: 88px; color: #33617f; font-size: 17.700px; padding-top: 1px; }
.play { width: 162px; height: 48px; display: flex; align-items: center; gap: 10px; padding-left: 11px; background: #000; border: 1px solid #a6a6a6; border-radius: 6px; color: #fff; font-family: "Lato", sans-serif; white-space: nowrap; }
.play div { display: flex; flex-direction: column; padding-bottom: 3px; }
.play small { font-size: 10.300px; line-height: 12px; }
.play strong { font-weight: 400; font-size: 20.300px; line-height: 22px; letter-spacing: -.4px; -webkit-text-stroke: .4px #fff; }

/* page body */
.content { height: 738px; flex: none; padding: 13px 0 0 289px; overflow: hidden; }
.ad { width: 910px; height: 113px; display: flex; justify-content: space-between; background: #ffd103; }
.ad p { margin: 30px 0 0 56px; font: 42.900px/50px "Liberation Serif", serif; color: #0d2b45; white-space: nowrap; -webkit-text-stroke: .3px #0d2b45; }
.ad-controls { display: flex; gap: 1px; padding: 1px 1px 0 0; }
.ad-controls svg { width: 19px; height: 19px; background: #fff; }

.card { width: 1250px; height: 586px; margin-top: 13px; background: #fff; border: 1px solid #e2e3e7; border-radius: 10px; box-shadow: 0 8px 24px rgba(40, 42, 55, .17); }
.card-head { height: 72px; display: grid; grid-template-columns: 1fr auto 1fr; align-items: center; background: #f8f9fe; border-bottom: 1px solid #dfe1e5; border-radius: 10px 10px 0 0; padding: 0 9px 0 17.500px; }
.market { font-size: 15px; color: #333; padding-top: 5px; }
.market b { font-weight: 600; color: #7cb22c; }
.card-head h1 { margin: 8px 0 0 12px; font-size: 26.700px; line-height: 36px; color: #344f6b; letter-spacing: -.5px; white-space: nowrap; }
.refresh { justify-self: end; width: 94px; height: 36px; margin-top: -2px; border: 1px solid #d8dbe2; border-radius: 18px; background: #fff; color: #626262; font: 600 14.900px "Open Sans", sans-serif; padding: 2px 0 0; }
.meters { display: flex; gap: 55.430px; padding: 40px 0 0 129.700px; }
.meter { width: 75px; display: flex; flex-direction: column; }
.meter h2 { margin: 0; height: 46.500px; display: flex; justify-content: center; font-size: 19.700px; line-height: 25px; font-weight: 600; color: #262626; letter-spacing: 0; }
.meter h2 svg { width: 16px; height: 16px; margin: 4px 0 0 8px; }
.bars { height: 375.500px; display: flex; flex-direction: column; background: #faf9f7; box-shadow: 0 9px 20px rgba(0, 0, 0, .13); }
.bars i { height: 22.100px; margin-top: 15.450px; background: #e6e5e0; }
.v10 i, .v8 i:nth-child(n+3), .v6 i:nth-child(n+5), .v5 i:nth-child(n+6), .v4 i:nth-child(n+7), .v1 i:nth-child(n+10) { background: #6ae919; }

/* bottom anchored banner */
.anchor-ad { position: relative; height: 118px; display: flex; justify-content: center; padding-top: 7px; background: linear-gradient(#e2e3e5, #e2e3e5) 100px 6px / 100% 1px no-repeat #fafafa; box-shadow: 0 -2px 5px rgba(0, 0, 0, .14); }
.anchor-toggle { position: absolute; left: 0; top: -30px; width: 71px; height: 36px; display: flex; align-items: center; justify-content: center; background: #fafafa; border-radius: 7px 7px 0 0; box-shadow: 1px -1px 2px rgba(0, 0, 0, .3); clip-path: inset(-4px -5px 5px 0); }
.anchor-ad .ad p { margin-top: 30px; }

/* scrollbar */
.scrollbar { width: 21px; display: flex; flex-direction: column; align-items: center; background: #f1f1f1; padding: 8px 0; }
.scrollbar svg { width: 10px; height: 6px; }
.thumb { width: 17px; height: 124px; margin-top: 7px; background: #c1c1c1; }
.scrollbar .down { margin-top: auto; }

/* browser sidebar */
.sidebar { width: 71px; display: flex; flex-direction: column; align-items: center; background: #3b3b3b; border-left: 1px solid #666; padding-right: 2px; }
.bing { width: 38px; height: 38px; margin-top: -43px; }
.apps { display: flex; flex-direction: column; gap: 28.700px; margin-top: 20px; }
.apps svg { width: 24px; height: 24px; }
.add { width: 15px; height: 15px; margin-top: 36.500px; }
.side-bottom { width: 35px; margin-top: auto; margin-bottom: 17px; display: flex; flex-direction: column; align-items: center; gap: 30px; padding-top: 19px; border-top: 1px solid #777; }
.side-bottom svg { width: 20px; height: 20px; }
.side-bottom svg + svg { width: 24px; height: 24px; }

/* taskbar */
.taskbar { height: 60px; flex: none; display: flex; align-items: flex-start; border-top: 1px solid #4a4546; color: #fff;
  background: linear-gradient(90deg, #242025 0, #242025 220px, #351d20 310px, #481314 405px, #3f1518 480px, #351523 640px, #252128 690px, #242125 1230px, #2d1c28 1360px, #2a2024 1470px, #3a1428 1550px, #3b122d 1640px, #40141d 1760px, #3d161b); }
.weather { position: relative; flex: none; width: 190.500px; padding: 14px 0 0 14px; }
.weather span { position: absolute; left: 23px; top: 8px; width: 31px; height: 20px; border-radius: 10px; background: #2b2d2c; font-size: 13.500px; line-height: 20px; text-align: center; }
.launch { flex: none; display: flex; }
.launch div { position: relative; width: 55px; height: 58px; display: flex; align-items: center; justify-content: center; }
.launch .start { padding-right: 4px; }
.launch svg { width: 30px; height: 30px; z-index: 1; }
.launch .focus::before { content: ""; position: absolute; inset: 4px 2.500px 4px; background: #4d2325; border: 1px solid #5c3335; border-radius: 6px; }
.launch .red::before { background: #4a2426; border-color: #4a2426; }
.launch s { position: absolute; left: 23.500px; bottom: 5px; width: 8px; height: 4px; border-radius: 2px; background: #9b9699; }
.launch .wide { left: 17.500px; width: 20px; background: #f77f68; }
.launch .pink { background: #ff939c; }
.badge { position: absolute; z-index: 2; left: 28.500px; top: 8px; width: 20px; height: 20px; border-radius: 10px; background: #f47b65; color: #111; font-style: normal; font-size: 13px; line-height: 20px; text-align: center; }
.badge.blue { background: #075697; color: #d7e5f0; }
.badge.count { left: 28.500px; top: 13px; height: 15px; line-height: 15px; border-radius: 4px; background: #eb3938; color: #fff; font-size: 10.500px; letter-spacing: -.5px; }
.tray { flex: 1; height: 58px; display: flex; align-items: center; padding-left: 25.500px; }
.tray > svg { width: 20px; height: 20px; margin-right: 20px; }
.status { display: flex; gap: 10px; }
.status svg { width: 20px; height: 20px; }
.clock { width: 90px; margin-top: -2px; text-align: right; font-size: 14.500px; line-height: 20px; letter-spacing: -.1px; white-space: nowrap; }
.notify { width: 24px; height: 24px; margin-left: 7px; border-radius: 12px; background: #f77f68; color: #222; font-size: 12.500px; line-height: 24px; text-align: center; }
```
